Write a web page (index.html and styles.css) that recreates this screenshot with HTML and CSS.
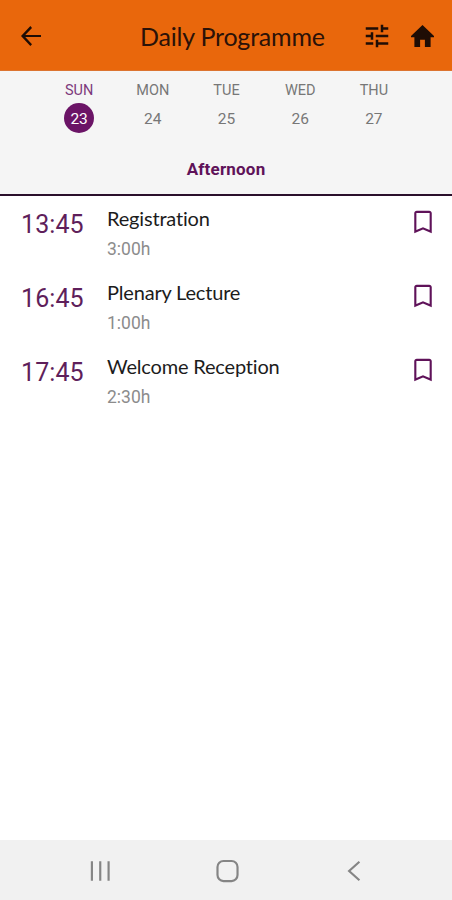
FILE: index.html
```html
<!DOCTYPE html>
<html lang="en">
<head>
    <meta charset="UTF-8">
    <meta name="viewport" content="width=device-width, initial-scale=1.0">
    <title>Daily Programme</title>
    <link rel="stylesheet" href="styles.css">
</head>
<body>
    <header class="topbar">
        <svg class="icon" viewBox="0 0 24 24"><path d="M20 11.2H7.4l5.4-5.6L11.5 4 4 12l7.5 8 1.3-1.5-5.4-5.7H20z"/></svg>
        <h1>Daily Programme</h1>
        <svg class="icon" viewBox="0 0 24 24"><path d="M3 17v2h6v-2H3zM3 5v2h10V5H3zm10 16v-2h8v-2h-8v-2h-2v6h2zM7 9v2H3v2h4v2h2V9H7zm14 4v-2H11v2h10zm-6-4h2V7h4V5h-4V3h-2v6z"/></svg>
        <svg class="home" viewBox="0 0 23 22"><path d="M11.5 0 23 11v1.2h-3.4V22h-5.7v-7.2H9.1V22H3.4v-9.8H0V11z"/></svg>
    </header>

    <section class="days">
        <div class="week">
            <div class="day active"><span>SUN</span><b>23</b></div>
            <div class="day"><span>MON</span><b>24</b></div>
            <div class="day"><span>TUE</span><b>25</b></div>
            <div class="day"><span>WED</span><b>26</b></div>
            <div class="day"><span>THU</span><b>27</b></div>
        </div>
        <div class="period">Afternoon</div>
    </section>

    <main class="events">
        <div class="event">
            <div class="time">13:45</div>
            <div class="info">
                <h3>Registration</h3>
                <p>3:00h</p>
            </div>
            <svg class="bookmark" viewBox="0 0 24 24"><path d="M17 3H7c-1.1 0-2 .9-2 2v16l7-3 7 3V5c0-1.1-.9-2-2-2zm.3 15.3L12 16.1l-5.3 2.2V4.7h10.6z"/></svg>
        </div>
        <div class="event">
            <div class="time">16:45</div>
            <div class="info">
                <h3>Plenary Lecture</h3>
                <p>1:00h</p>
            </div>
            <svg class="bookmark" viewBox="0 0 24 24"><path d="M17 3H7c-1.1 0-2 .9-2 2v16l7-3 7 3V5c0-1.1-.9-2-2-2zm.3 15.3L12 16.1l-5.3 2.2V4.7h10.6z"/></svg>
        </div>
        <div class="event">
            <div class="time">17:45</div>
            <div class="info">
                <h3>Welcome Reception</h3>
                <p>2:30h</p>
            </div>
            <svg class="bookmark" viewBox="0 0 24 24"><path d="M17 3H7c-1.1 0-2 .9-2 2v16l7-3 7 3V5c0-1.1-.9-2-2-2zm.3 15.3L12 16.1l-5.3 2.2V4.7h10.6z"/></svg>
        </div>
    </main>

    <nav class="navbar">
        <svg viewBox="0 0 24 24"><path d="M3.6 3v18M11.3 3v18M19 3v18"/></svg>
        <svg viewBox="0 0 24 24"><rect x="2.3" y="2.8" width="18.5" height="18.5" rx="5.5"/></svg>
        <svg viewBox="0 0 24 24"><path d="M17 3.5 7.5 12l9.5 8.5"/></svg>
    </nav>
</body>
</html>
```

FILE: styles.css
```css
* { box-sizing: border-box; margin: 0; padding: 0; }
body { display: flex; flex-direction: column; height: 900px; font-family: Roboto, sans-serif; background: #fff; }
svg { display: block; flex-shrink: 0; }

.topbar { display: flex; align-items: center; height: 71px; padding: 1px 18px 0 16px; background: #e9670c; border-bottom: 1px solid #dc7430; }
.topbar h1 { flex: 1; padding-left: 94px; font: 400 25px Lato, sans-serif; letter-spacing: -0.2px; color: #2b1208; white-space: nowrap; }
.icon { width: 30px; height: 30px; fill: #1f0d05; }
.home { width: 23px; height: 22px; margin-left: 19px; fill: #1f0d05; }

.days { height: 125px; background: #f5f5f5; border-bottom: 2px solid #2a0f2b; }
.week { display: grid; grid-template-columns: repeat(5, 73.7px); justify-content: center; padding: 11px 0 0 1px; }
.day { display: flex; flex-direction: column; align-items: center; font-size: 14.5px; line-height: 18px; color: #777; }
.day b { width: 30px; height: 30px; margin-top: 3px; border-radius: 50%; font-size: 15.5px; font-weight: 400; line-height: 33px; text-align: center; }
.active { color: #7d3a7c; }
.active b { background: #6b1466; color: #fff; }
.period { margin-top: 25px; font-size: 17px; font-weight: 700; letter-spacing: 0.2px; line-height: 22px; text-align: center; color: #5f1259; }

.events { flex: 1; padding-top: 10px; }
.event { display: flex; align-items: flex-start; height: 73.8px; padding: 0 14px 0 21px; }
.time { width: 86px; padding-top: 4px; font-size: 25px; letter-spacing: 0.1px; line-height: 30px; color: #5f1f5b; }
.info { flex: 1; }
.info h3 { font: 400 20px/24px Lato, sans-serif; letter-spacing: -0.18px; color: #1c1c1c; }
.info p { margin-top: 8px; font-size: 17.5px; line-height: 22px; color: #8c8c8c; }
.bookmark { width: 30px; height: 30px; margin-top: 1px; fill: #5f1259; }

.navbar { display: flex; justify-content: space-between; align-items: center; height: 60px; padding: 2px 85px 0 88px; background: #f1f1f1; }
.navbar svg { width: 26px; height: 26px; fill: none; stroke: #858585; stroke-width: 2; }
```
